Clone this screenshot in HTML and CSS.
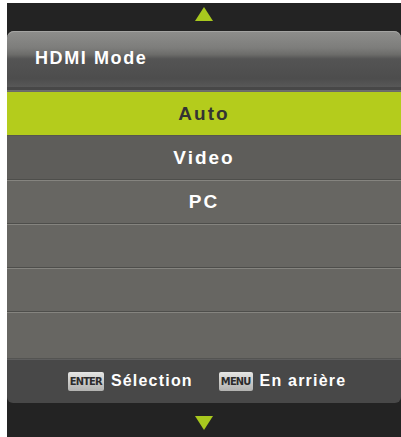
FILE: index.html
```html
<!DOCTYPE html>
<html>
<head>
<meta charset="utf-8">
<link rel="stylesheet" href="styles.css">
</head>
<body>
<div class="osd">
  <div class="nav nav-top"><span class="tri tri-up"></span></div>
  <div class="panel">
    <div class="header">HDMI Mode</div>
    <div class="list">
      <div class="row selected">Auto</div>
      <div class="row dim">Video</div>
      <div class="row">PC</div>
      <div class="row"></div>
      <div class="row"></div>
      <div class="row last"></div>
    </div>
    <div class="footer">
      <span class="hint"><span class="key">ENTER</span>Sélection</span>
      <span class="hint"><span class="key">MENU</span>En arrière</span>
    </div>
  </div>
  <div class="nav nav-bottom"><span class="tri tri-down"></span></div>
</div>
</body>
</html>
```
FILE: styles.css
```css
html, body {
  margin: 0;
  padding: 0;
  background: #ffffff;
}
.osd {
  margin: 3px 0 0 7px;
  width: 394px;
  height: 434px;
  background: #232323;
  display: flex;
  flex-direction: column;
  font-family: "Liberation Sans", Arial, sans-serif;
  font-weight: bold;
  color: #ffffff;
}
.nav {
  display: flex;
  justify-content: center;
}
.nav-top {
  height: 28px;
  align-items: flex-start;
  padding-top: 4px;
  box-sizing: border-box;
}
.nav-bottom {
  flex: 1;
  align-items: flex-start;
  padding-top: 13px;
  box-sizing: border-box;
}
.tri {
  width: 0;
  height: 0;
  border-left: 9px solid transparent;
  border-right: 9px solid transparent;
}
.tri-up {
  border-bottom: 14px solid #a8c81e;
}
.tri-down {
  border-top: 14px solid #a8c81e;
}
.panel {
  display: flex;
  flex-direction: column;
}
.header {
  height: 56px;
  border-radius: 7px 7px 0 0;
  background: linear-gradient(180deg, #8e8e8c 0%, #7d7d7b 30%, #6c6c6a 42%, #545454 50%, #4d4d4d 85%, #585858 100%);
  box-shadow: inset 0 1px 0 #a4a4a2;
  font-size: 18px;
  letter-spacing: 1.6px;
  padding-left: 28px;
  padding-bottom: 2px;
  display: flex;
  align-items: center;
  box-sizing: border-box;
}
.list {
  border-top: 3px solid #474747;
  box-shadow: inset 0 1px 0 #6e6e6e;
  padding-top: 2px;
  background: #6b6b68;
}
.row {
  height: 44px;
  display: flex;
  align-items: center;
  justify-content: center;
  font-size: 19px;
  letter-spacing: 2px;
  background: #676662;
  border-bottom: 1px solid #4e4e4b;
  box-shadow: inset 0 1px 0 #85847f;
  box-sizing: border-box;
}
.row.selected {
  background: #b4cc1c;
  color: #333333;
  box-shadow: none;
  border-bottom-color: #56564f;
}
.row.dim {
  background: #5e5d5a;
  box-shadow: none;
}
.row.last {
  height: 47px;
  border-bottom: 1px solid #545452;
}
.footer {
  height: 44px;
  background: #484848;
  box-shadow: inset 0 1px 0 #5e5e5e;
  border-radius: 0 0 6px 6px;
  display: flex;
  align-items: center;
  justify-content: center;
  gap: 26px;
  padding-left: 6px;
  box-sizing: border-box;
  font-size: 16px;
  letter-spacing: 1.2px;
}
.hint {
  display: flex;
  align-items: center;
  gap: 7px;
}
.key {
  display: inline-block;
  background: linear-gradient(180deg, #e6e6e4 0%, #c8c8c6 55%, #b2b2b0 100%);
  color: #2c2c2c;
  font-family: "DejaVu Sans Condensed", "Liberation Sans Narrow", "Liberation Sans", sans-serif;
  font-size: 11px;
  letter-spacing: -0.8px;
  padding: 4px 2px 3px;
  border-radius: 2px;
  line-height: 12px;
}
```
